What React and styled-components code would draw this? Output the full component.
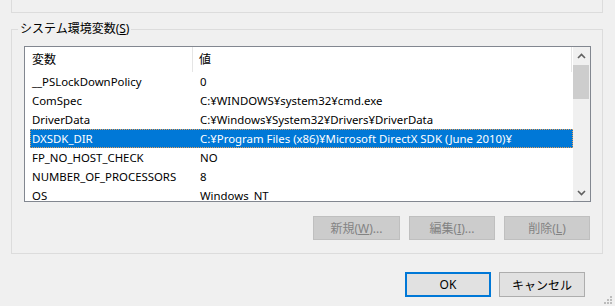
import React from 'react'
import styled, { createGlobalStyle } from 'styled-components'

const GlobalStyle = createGlobalStyle`
  html, body {
    margin: 0;
    background: #f0f0f0;
  }
  body {
    font-family: "Noto Sans", "Noto Sans CJK JP", sans-serif;
    font-size: 12px;
    color: #000;
  }
`

const rows = [
  ['__PSLockDownPolicy', '0'],
  ['ComSpec', 'C:¥WINDOWS¥system32¥cmd.exe'],
  ['DriverData', 'C:¥Windows¥System32¥Drivers¥DriverData'],
  ['DXSDK_DIR', 'C:¥Program Files (x86)¥Microsoft DirectX SDK (June 2010)¥'],
  ['FP_NO_HOST_CHECK', 'NO'],
  ['NUMBER_OF_PROCESSORS', '8'],
  ['OS', 'Windows_NT'],
]

const App = () => {
  return (
    <Window>
      <GlobalStyle />
      <TopGroup />
      <Group>
        <Legend>システム環境変数(<u>S</u>)</Legend>
        <ListBox>
          <ListContent>
            <Header>
              <HeadCell $w={168} $pad={7} $divider>変数</HeadCell>
              <HeadCell $pad={6}>値</HeadCell>
            </Header>
            {rows.map(([name, value]) => (
              <Row key={name} $selected={name === 'DXSDK_DIR'}>
                <Cell $w={163} $pad={2}>{name}</Cell>
                <Cell $pad={7}>{value}</Cell>
              </Row>
            ))}
          </ListContent>
          <ScrollBar>
            <ArrowButton>
              <svg width="9" height="6" viewBox="0 0 9 6">
                <path d="M1 5 L4.5 1.5 L8 5" fill="none" stroke="#606060" strokeWidth="1.6" />
              </svg>
            </ArrowButton>
            <Thumb />
            <Track />
            <ArrowButton>
              <svg width="9" height="6" viewBox="0 0 9 6">
                <path d="M1 1 L4.5 4.5 L8 1" fill="none" stroke="#606060" strokeWidth="1.6" />
              </svg>
            </ArrowButton>
          </ScrollBar>
        </ListBox>
        <ButtonRow>
          <Button disabled $w={87}>新規(<u>W</u>)...</Button>
          <Button disabled>編集(<u>I</u>)...</Button>
          <Button disabled>削除(<u>L</u>)</Button>
        </ButtonRow>
      </Group>
      <Footer>
        <DialogButton $default>OK</DialogButton>
        <DialogButton>キャンセル</DialogButton>
      </Footer>
      <Grip width="12" height="12" viewBox="0 0 12 12">
        <rect x="8" y="2" width="2" height="2" fill="#bcbcbc" />
        <rect x="5" y="5" width="2" height="2" fill="#bcbcbc" />
        <rect x="8" y="5" width="2" height="2" fill="#bcbcbc" />
        <rect x="2" y="8" width="2" height="2" fill="#bcbcbc" />
        <rect x="5" y="8" width="2" height="2" fill="#bcbcbc" />
        <rect x="8" y="8" width="2" height="2" fill="#bcbcbc" />
      </Grip>
    </Window>
  )
}

export default App

const Window = styled.div`
  position: relative;
  width: 615px;
  height: 306px;
  overflow: hidden;
  padding-left: 11px;
  box-sizing: border-box;
  display: flex;
  flex-direction: column;
`

const TopGroup = styled.div`
  width: 592px;
  height: 13px;
  box-sizing: border-box;
  border: 1px solid #dcdcdc;
  border-top: none;
  flex-shrink: 0;
`

const Group = styled.fieldset`
  margin: 8px 0 0 0;
  width: 592px;
  box-sizing: border-box;
  border: 1px solid #dcdcdc;
  padding: 9px 11px 13px 12px;
  min-width: 0;
`

const Legend = styled.legend`
  margin-left: -6px;
  padding: 0 2px;
  line-height: 16px;
  font-size: 12px;
  u { text-underline-offset: 1px; }
`

const ListBox = styled.div`
  width: 567px;
  height: 156px;
  box-sizing: border-box;
  border: 1px solid #828790;
  background: #fff;
  display: flex;
`

const ListContent = styled.div`
  flex: 1;
  overflow: hidden;
`

const Header = styled.div`
  height: 25px;
  display: flex;
  align-items: center;
  border-right: 1px solid #e5e5e5;
  margin-right: 1px;
`

const HeadCell = styled.div`
  width: ${p => (p.$w ? `${p.$w}px` : 'auto')};
  flex: ${p => (p.$w ? 'none' : 1)};
  height: 100%;
  display: flex;
  align-items: center;
  padding-left: ${p => p.$pad}px;
  box-sizing: border-box;
  border-right: ${p => (p.$divider ? '1px solid #e5e5e5' : 'none')};
  padding-bottom: 2px;
`

const Row = styled.div`
  display: flex;
  align-items: center;
  height: 19px;
  margin-left: 5px;
  font-size: 11.4px;
  background: ${p => (p.$selected ? '#0078d7' : 'transparent')};
  color: ${p => (p.$selected ? '#fff' : '#000')};
  outline: ${p => (p.$selected ? '1px dotted #e8a05a' : 'none')};
  outline-offset: -1px;
  white-space: nowrap;
`

const Cell = styled.div`
  width: ${p => (p.$w ? `${p.$w}px` : 'auto')};
  flex: ${p => (p.$w ? 'none' : 1)};
  padding-left: ${p => p.$pad}px;
  box-sizing: border-box;
  overflow: hidden;
`

const ScrollBar = styled.div`
  width: 17px;
  background: #f0f0f0;
  display: flex;
  flex-direction: column;
`

const ArrowButton = styled.div`
  height: 17px;
  display: flex;
  align-items: center;
  justify-content: center;
`

const Thumb = styled.div`
  height: 34px;
  margin: 1px 1px 0 0;
  background: #cdcdcd;
`

const Track = styled.div`
  flex: 1;
`

const ButtonRow = styled.div`
  display: flex;
  justify-content: flex-end;
  gap: 9px;
  margin-top: 14px;
  padding-right: 1px;
`

const Button = styled.button`
  width: ${p => p.$w || 86}px;
  height: 24px;
  padding: 0;
  font: inherit;
  font-size: 12px;
  background: #cccccc;
  border: 1px solid #bfbfbf;
  color: #838383;
  u { text-underline-offset: 1px; }
`

const Footer = styled.div`
  display: flex;
  justify-content: flex-end;
  gap: 8px;
  margin-top: 18px;
  padding-right: 30px;
`

const DialogButton = styled.button`
  width: 86px;
  height: 25px;
  padding: 0;
  font: inherit;
  font-size: 12px;
  color: #000;
  background: #e1e1e1;
  box-sizing: border-box;
  border: ${p => (p.$default ? '2px solid #0078d7' : '1px solid #adadad')};
`

const Grip = styled.svg`
  position: absolute;
  right: 1px;
  bottom: 0px;
`
